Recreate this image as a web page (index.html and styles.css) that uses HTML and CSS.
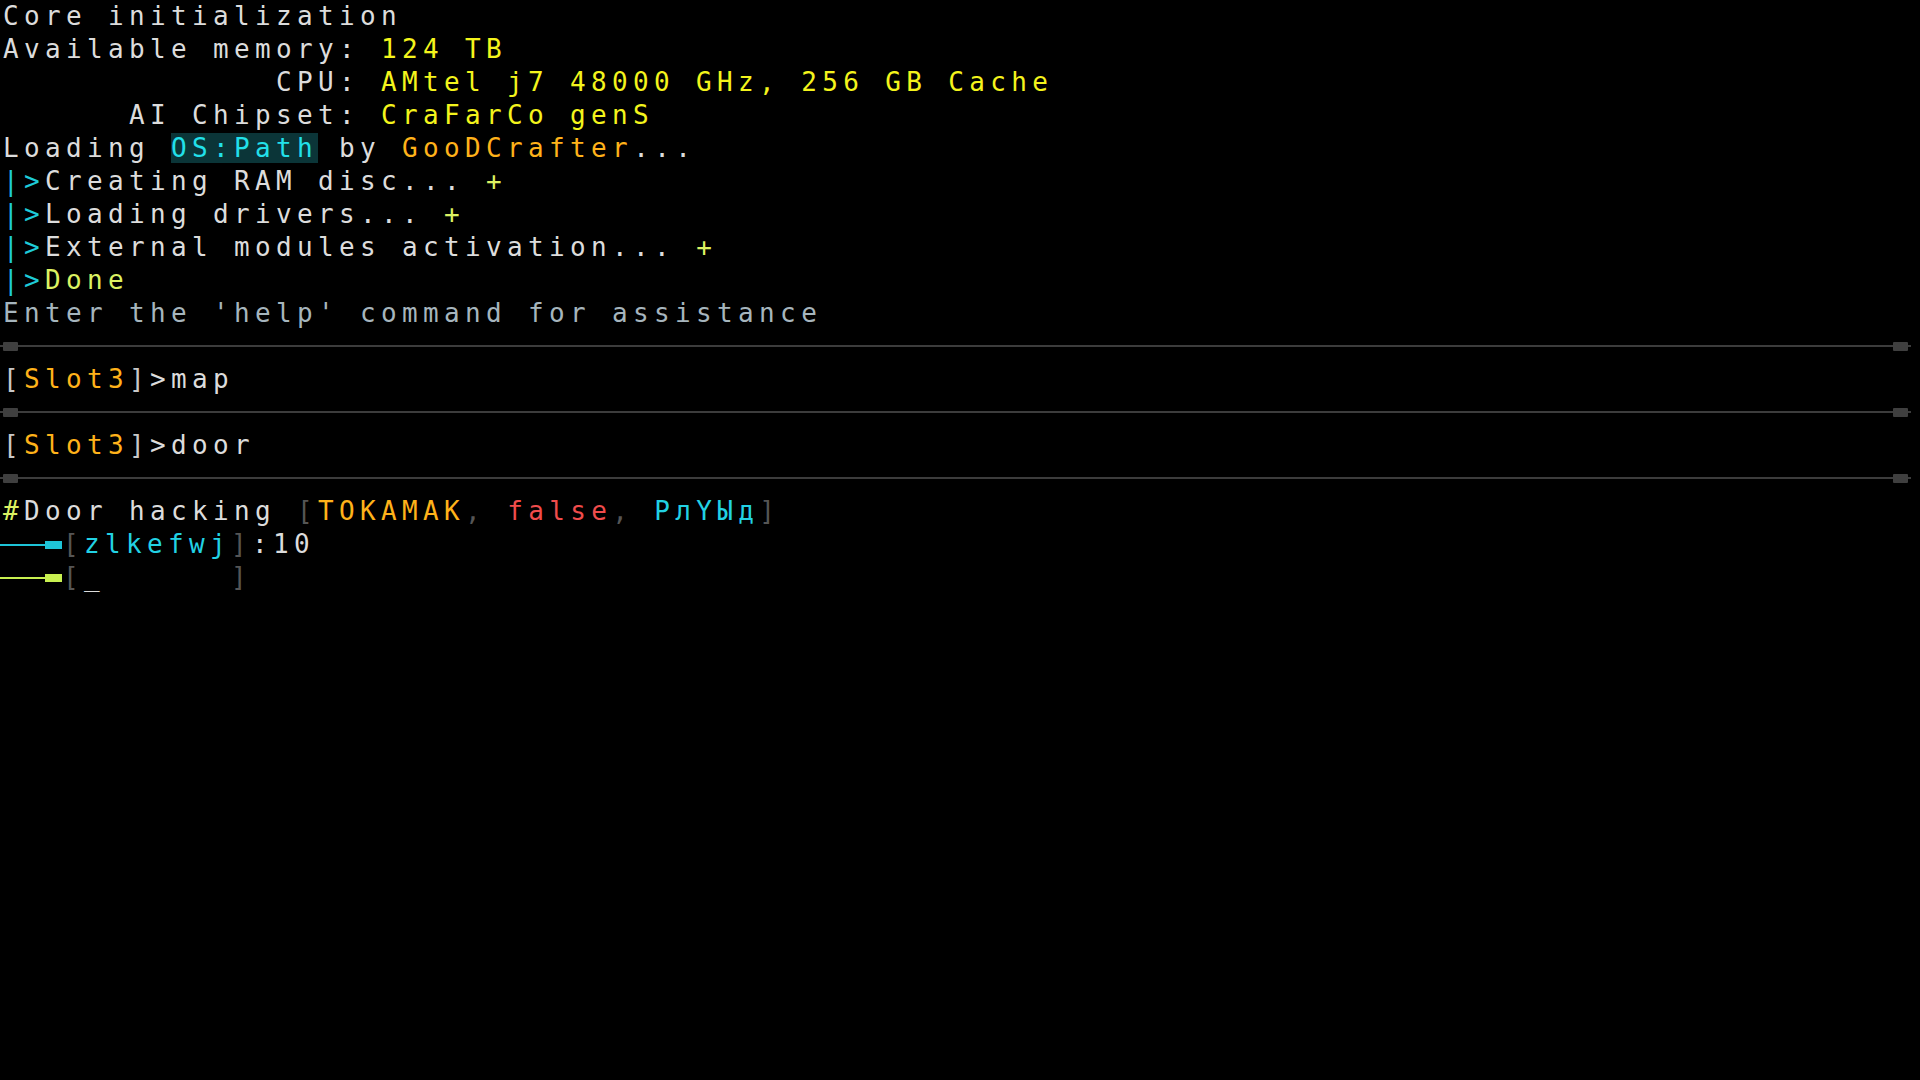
FILE: index.html
```html
<!DOCTYPE html>
<html lang="en">
<head>
    <meta charset="UTF-8">
    <title>Terminal</title>
    <link rel="stylesheet" href="styles.css">
</head>
<body>

    <div class="terminal">
        <div class="line">Core initialization</div>
        <div class="line">Available memory: <span class="val">124 TB</span></div>
        <div class="line">             CPU: <span class="val">AMtel j7 48000 GHz, 256 GB Cache</span></div>
        <div class="line">      AI Chipset: <span class="val">CraFarCo genS</span></div>
        <div class="line">Loading <span class="os">OS:Path</span> by <span class="orange">GooDCrafter</span>...</div>
        <div class="line"><span class="pipe">|&gt;</span>Creating RAM disc... <span class="ok">+</span></div>
        <div class="line"><span class="pipe">|&gt;</span>Loading drivers... <span class="ok">+</span></div>
        <div class="line"><span class="pipe">|&gt;</span>External modules activation... <span class="ok">+</span></div>
        <div class="line"><span class="pipe">|&gt;</span><span class="ok">Done</span></div>
        <div class="line hint">Enter the 'help' command for assistance</div>

        <div class="sep"><span class="knob"></span><span class="knob"></span></div>
        <div class="line"><span class="brk">[</span><span class="orange">Slot3</span><span class="brk">]</span>&gt;map</div>
        <div class="sep"><span class="knob"></span><span class="knob"></span></div>
        <div class="line"><span class="brk">[</span><span class="orange">Slot3</span><span class="brk">]</span>&gt;door</div>
        <div class="sep"><span class="knob"></span><span class="knob"></span></div>

        <div class="line"><span class="ok">#</span>Door hacking <span class="dim">[</span><span class="orange">TOKAMAK</span><span class="dim">, </span><span class="red">false</span><span class="dim">, </span><span class="cyan">РлYЫд</span><span class="dim">]</span></div>
        <div class="line"><span class="arrow cyan-arrow"><i></i><b></b></span><span class="dim">[</span><span class="cyan">zlkefwj</span><span class="dim">]</span>:10</div>
        <div class="line"><span class="arrow green-arrow"><i></i><b></b></span><span class="dim">[</span>_      <span class="dim">]</span></div>
    </div>

</body>
</html>
```

FILE: styles.css
```css
* {
    box-sizing: border-box;
    margin: 0;
    padding: 0;
}

body {
    background: #000;
    width: 1920px;
    height: 1080px;
    overflow: hidden;
}

.terminal {
    font-family: "DejaVu Sans Mono", "Liberation Mono", monospace;
    font-size: 26px;
    line-height: 33px;
    letter-spacing: 5.35px;
    color: #dcdcdc;
}

.line {
    height: 33px;
    padding-left: 3px;
    white-space: pre;
}

.val { color: #f4f41c; }
.orange { color: #ffb21a; }
.os {
    color: #22e0ea;
    background: #0b3538;
}
.pipe { color: #1ecbd8; }
.ok { color: #dcf262; }
.hint { color: #a6b5bd; }
.brk { color: #c8c8c8; }
.dim { color: #555; }
.red { color: #f04c4c; }
.cyan { color: #22d2e4; }

/* separators between commands */
.sep {
    height: 33px;
    display: flex;
    align-items: center;
    justify-content: space-between;
    padding: 0 12px 0 3px;
    background: linear-gradient(#3c3c3c, #3c3c3c) no-repeat 0 15px / 1911px 2px;
}

.knob {
    width: 15px;
    height: 9px;
    background: #3f3f3f;
    border-radius: 1px;
}

/* arrows in front of the hacking rows */
.arrow {
    display: inline-flex;
    align-items: center;
    width: 63px;
    height: 33px;
    margin-left: -3px;
    padding-right: 1px;
    vertical-align: top;
    letter-spacing: 0;
}

.arrow i {
    flex: 1;
    height: 2px;
}

.arrow b {
    width: 17px;
    height: 8px;
    margin-left: -2px;
}

.cyan-arrow i, .cyan-arrow b { background: #1ec4d8; }
.green-arrow i, .green-arrow b { background: #c8f050; }
```
